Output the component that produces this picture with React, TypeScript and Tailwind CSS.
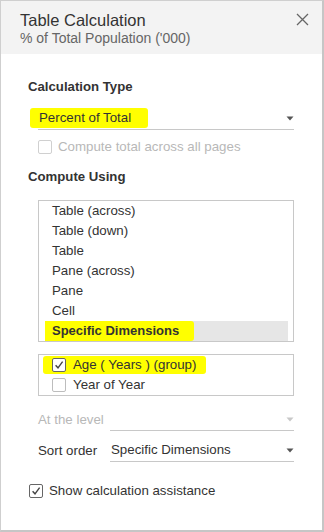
import React from "react";

const font = { fontFamily: '"Liberation Sans", Arial, sans-serif' };

function Arrow({ muted = false }: { muted?: boolean }) {
    return (
        <svg width="8" height="5" viewBox="0 0 8 5" className="shrink-0">
            <path d="M0.5 0.5 H7.5 L4 4.5 Z" fill={muted ? "#c8c8c8" : "#555555"} />
        </svg>
    );
}

function Check({ checked = false, muted = false }: { checked?: boolean; muted?: boolean }) {
    return (
        <span
            className={`flex h-[14px] w-[14px] shrink-0 items-center justify-center rounded-[2px] border bg-white ${
                checked ? "border-[#666]" : muted ? "border-[#d0d0d0]" : "border-[#bdbdbd]"
            }`}
        >
            {checked && (
                <svg width="10" height="10" viewBox="0 0 10 10">
                    <path d="M1.6 5.2 L4 7.8 L8.6 1.6" fill="none" stroke="#444" strokeWidth="1.4" />
                </svg>
            )}
        </span>
    );
}

const computeItems = ["Table (across)", "Table (down)", "Table", "Pane (across)", "Pane", "Cell"];

export default function App() {
    return (
        <div
            style={font}
            className="flex h-[532px] w-[324px] flex-col border-t border-l border-r-2 border-b-2 border-t-[#cfcfcf] border-l-[#cfcfcf] border-r-[#c6c6c6] border-b-[#c6c6c6] bg-white text-[#333]"
        >
            {/* Header */}
            <div className="flex bg-[#f3f3f3] pl-[19px] pr-[13px] pt-[9px] pb-[8px]">
                <div className="flex-1">
                    <div className="text-[16.5px] leading-[20px] text-[#333]">Table Calculation</div>
                    <div className="text-[14px] leading-[16px] text-[#666]">% of Total Population ('000)</div>
                </div>
                <svg width="13" height="13" viewBox="0 0 13 13" className="mt-[3px]">
                    <path d="M1 1 L12 12 M12 1 L1 12" stroke="#666" strokeWidth="1.3" />
                </svg>
            </div>

            {/* Body */}
            <div className="flex flex-col pl-[27px] pr-[28px] text-[13.3px]">
                <div className="mt-[25px] text-[13.2px] font-bold leading-[16px] text-[#333]">Calculation Type</div>

                <div className="ml-[10px] mt-[12px] flex h-[23px] items-center border-b border-[#c8c8c8]">
                    <div className="flex-1">
                        <span className="-ml-[8px] inline-block rounded-[3px] bg-[#ffff00] pl-[9px] pr-[17px] leading-[20px] text-[#333]">
                            Percent of Total
                        </span>
                    </div>
                    <Arrow />
                </div>

                <div className="ml-[10px] mt-[10px] flex h-[14px] items-center gap-[6px]">
                    <Check muted />
                    <span className="text-[#b8b8b8]">Compute total across all pages</span>
                </div>

                <div className="mt-[15px] text-[13.2px] font-bold leading-[16px] text-[#333]">Compute Using</div>

                <div className="ml-[10px] mt-[15px] flex flex-col border border-[#c8c8c8] pl-[6px] pr-[5px]">
                    {computeItems.map((item) => (
                        <div key={item} className="h-[20px] pl-[7px] leading-[20px]">
                            {item}
                        </div>
                    ))}
                    <div className="flex h-[20px] bg-[#e6e6e6]">
                        <span className="rounded-r-[3px] bg-[#ffff00] pl-[7px] pr-[15px] text-[13px] font-bold leading-[20px] text-[#333]">
                            Specific Dimensions
                        </span>
                    </div>
                </div>

                <div className="ml-[10px] mt-[12px] flex flex-col border border-[#c8c8c8] pl-[13px]">
                    <div className="flex h-[20px] items-center">
                        <span className="-ml-[9px] flex h-[18px] items-center gap-[7px] rounded-[3px] bg-[#ffff00] pl-[9px] pr-[10px]">
                            <Check checked />
                            <span>Age ( Years ) (group)</span>
                        </span>
                    </div>
                    <div className="flex h-[20px] items-center gap-[7px]">
                        <Check />
                        <span>Year of Year</span>
                    </div>
                </div>

                <div className="ml-[10px] mt-[12px] flex items-center">
                    <span className="w-[72px] shrink-0 text-[#b8b8b8]">At the level</span>
                    <div className="flex h-[23px] flex-1 items-center justify-end border-b border-[#c8c8c8]">
                        <Arrow muted />
                    </div>
                </div>

                <div className="ml-[10px] mt-[8px] flex items-center">
                    <span className="w-[72px] shrink-0">Sort order</span>
                    <div className="flex h-[23px] flex-1 items-center border-b border-[#c8c8c8] pl-[1px]">
                        <span className="flex-1">Specific Dimensions</span>
                        <Arrow />
                    </div>
                </div>

                <div className="ml-[1px] mt-[22px] flex h-[14px] items-center gap-[6px]">
                    <Check checked />
                    <span>Show calculation assistance</span>
                </div>
            </div>
        </div>
    );
}
